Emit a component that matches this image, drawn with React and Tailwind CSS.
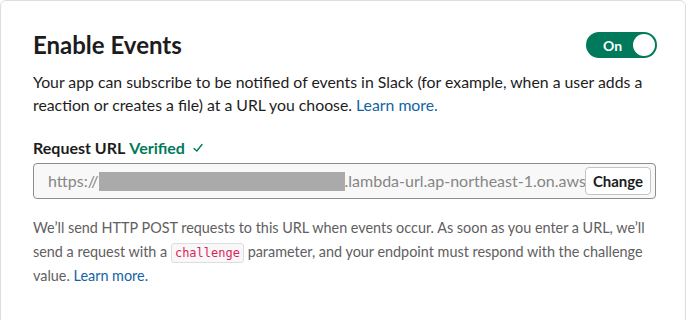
import React from 'react';

const App = () => {
  return (
    <div className="h-[320px] w-[689px] overflow-hidden bg-white font-['Lato','Noto_Sans',sans-serif] text-[#1d1c1d]">
      <div className="h-[340px] w-[686px] rounded-[6px] border border-[#dddddd] px-[32px] pt-[28px]">
        <div className="flex items-center justify-between">
          <h1 className="text-[24px] font-bold leading-[32px]">Enable Events</h1>
          <button className="mr-[-4px] flex h-[26px] w-[71px] items-center justify-between rounded-full bg-[#007a5a] pl-[17px] pr-[2px] text-[14px] font-bold text-white">
            <span>On</span>
            <span className="h-[22px] w-[22px] rounded-full bg-white" />
          </button>
        </div>
        <p className="mt-[9px] text-[15.8px] leading-[23px]">
          Your app can subscribe to be notified of events in Slack (for example, when a user adds a reaction or creates a file) at a URL you choose.{' '}
          <a className="text-[#1264a3]">Learn more.</a>
        </p>

        <div className="mt-[21px] flex items-center text-[16px] font-bold leading-[22px]">
          Request URL
          <span className="ml-[4px] text-[#007a5a]">Verified</span>
          <svg className="ml-[7px] h-[12px] w-[12px]" viewBox="0 0 12 12" fill="none">
            <path d="M2 6.5 L4.8 9 L10 2.5" stroke="#007a5a" strokeWidth="1.4" strokeLinecap="round" strokeLinejoin="round" />
          </svg>
        </div>

        <div className="mt-[4px] flex h-[36px] w-[623px] items-center overflow-hidden rounded-[4px] border border-[#8d8d8d] bg-[#f8f8f8] pl-[14px] pr-[4px] text-[16px]">
          <div className="flex min-w-0 flex-1 items-center overflow-hidden whitespace-nowrap text-[#868686]">
            <span>https://</span>
            <span className="h-[19px] w-[246px] shrink-0 bg-[#aaaaaa]" />
            <span>.lambda-url.ap-northeast-1.on.aws/</span>
          </div>
          <button className="h-[28px] w-[66px] shrink-0 rounded-[4px] border border-[#c4c4c4] bg-white text-[15px] font-bold text-[#1d1c1d]">
            Change
          </button>
        </div>

        <p className="mt-[17px] text-[14.4px] leading-[24px] text-[#616061]">
          We’ll send HTTP POST requests to this URL when events occur. As soon as you enter a URL, we’ll send a request with a{' '}
          <code className="inline-block rounded-[3px] border border-[#dddddd] bg-[#f8f8f8] px-[3px] font-['DejaVu_Sans_Mono',monospace] text-[12px] leading-[18px] text-[#e01e5a]">challenge</code>{' '}
          parameter, and your endpoint must respond with the challenge value.{' '}
          <a className="text-[#1264a3]">Learn more.</a>
        </p>
      </div>
    </div>
  );
};

export default App;
